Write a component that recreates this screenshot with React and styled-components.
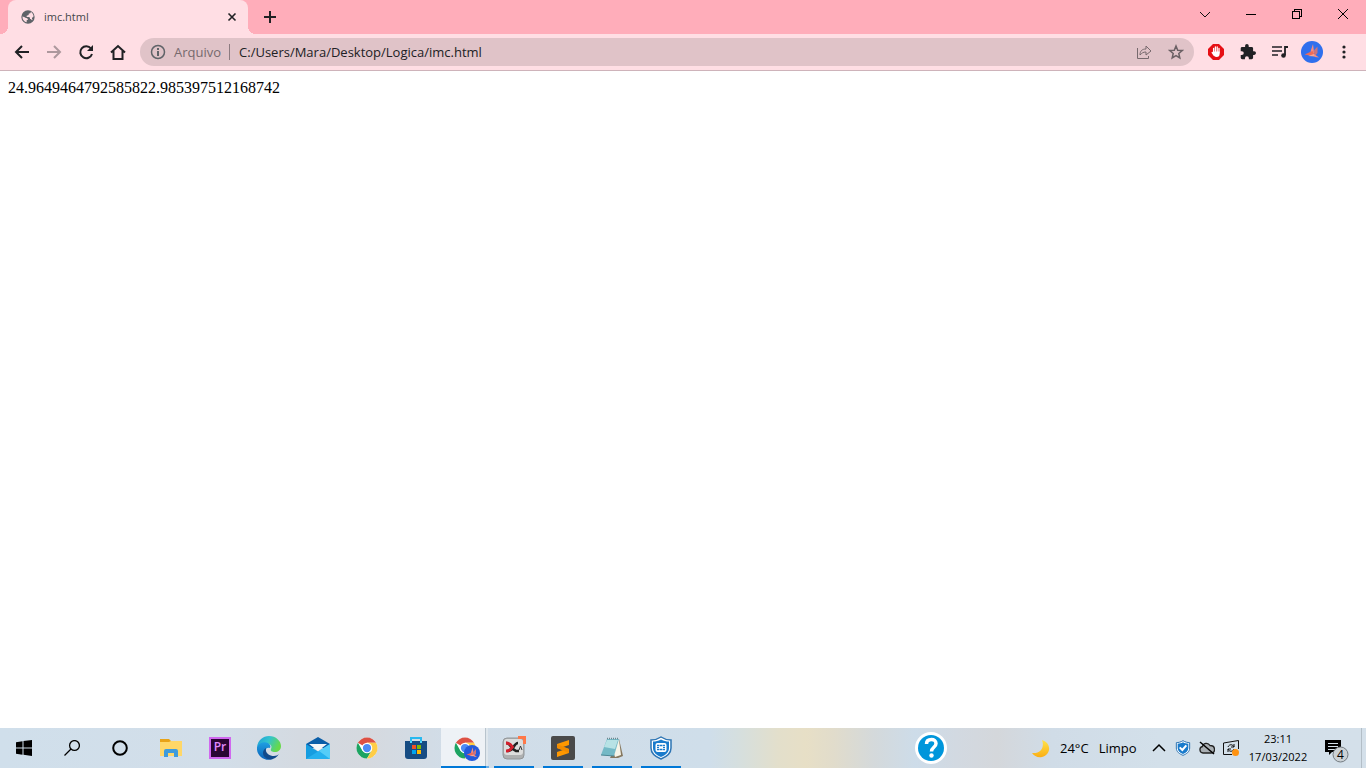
import React from "react";
import styled, { createGlobalStyle } from "styled-components";

const GlobalStyle = createGlobalStyle`
  * { box-sizing: border-box; }
  body { margin: 0; background: #ffffff; }
  button, input { font: inherit; color: inherit; border: 0; padding: 0; margin: 0; background: none; }
  svg { display: block; flex: none; }
`;

const Screen = styled.div`
  min-height: 100vh;
  display: flex;
  flex-direction: column;
  font-family: "Open Sans", "Noto Sans", sans-serif;
  color: #202124;
`;

const TabStrip = styled.header`
  display: flex;
  height: 34px;
  padding-left: 8px;
  background: #ffadba;
`;

const Tab = styled.div`
  position: relative;
  display: flex;
  align-items: center;
  width: 240px;
  padding: 0 8px 0 12px;
  gap: 8px;
  border-radius: 8px 8px 0 0;
  background: #ffdee4;
  font-size: 11px;
  line-height: 16px;
  color: #45474a;

  &::before, &::after {
    content: "";
    position: absolute;
    bottom: 0;
    width: 8px;
    height: 8px;
  }
  &::before { left: -8px; background: radial-gradient(circle at 0 0, #ffadba 8px, #ffdee4 8px); }
  &::after { right: -8px; background: radial-gradient(circle at 100% 0, #ffadba 8px, #ffdee4 8px); }
`;

const TabTitle = styled.span`
  flex: 1;
`;

const IconButton = styled.button`
  display: flex;
  align-items: center;
  justify-content: center;
  flex: none;
  width: ${(p) => p.$width || 32}px;
  height: ${(p) => p.$height || 28}px;
`;

const NewTab = styled(IconButton)`
  margin: 3px 0 0 8px;
`;

const WindowControls = styled.div`
  display: flex;
  margin-left: auto;
`;

const Toolbar = styled.nav`
  display: flex;
  align-items: center;
  height: 37px;
  padding: 0 6px;
  background: #ffdee4;
  border-bottom: 1px solid #ceb3ba;
`;

const AddressBar = styled.div`
  display: flex;
  align-items: center;
  flex: 1;
  height: 28px;
  margin: 0 6px;
  padding: 0 2px 0 10px;
  border-radius: 14px;
  background: #e0c3c8;
  font-size: 13px;
  line-height: 20px;
`;

const Scheme = styled.label`
  margin-left: 8px;
  padding-right: 8px;
  color: #76696d;
`;

const Divider = styled.span`
  width: 1px;
  height: 16px;
  margin-right: 9px;
  background: #8d7b80;
`;

const Url = styled.input`
  flex: 1;
  min-width: 0;
  height: 20px;
  outline: 0;
`;

const Document = styled.main`
  flex: 1;
  padding: 8px;
  background: #ffffff;
  color: #000000;
  font-family: "Liberation Serif", "Times New Roman", serif;
  font-size: 16px;
  line-height: 18px;
`;

const Taskbar = styled.footer`
  display: flex;
  height: 40px;
  color: #000000;
  background: linear-gradient(90deg, #d0dfeb 0%, #d2dee9 16%, #d4dae1 22%, #d5d9df 27%, #d1dde8 33%, #cfdeea 52%,
    #d5dfdf 54%, #e3dfcb 57%, #e7dfc6 59%, #e1dccb 61%, #d4d9db 64%, #cddce9 67%, #d2d9e1 70%, #d4d7db 73%, #d0dce7 77%, #d3e0ea 85%, #d4e0ea 100%);
`;

const SystemButtons = styled.div`
  display: flex;
  width: 146px;
`;

const TaskButton = styled.button`
  position: relative;
  display: flex;
  align-items: center;
  justify-content: center;
  flex: none;
  width: 49px;
  height: 40px;

  &::after {
    content: "";
    position: absolute;
    left: 5px;
    bottom: 0;
    width: 40px;
    height: 2px;
    background: ${(p) => (p.$running ? "#0078d7" : "transparent")};
  }
`;

const ActiveTask = styled(TaskButton)`
  background: linear-gradient(90deg, transparent 1px, #eef2f6 1px, #eef2f6 45px, #b8c4cd 45px, #b8c4cd 46px, #dfe7ed 46px, #dfe7ed 48px, transparent 48px);

  &::after {
    left: 1px;
    width: 48px;
    background: linear-gradient(90deg, #0078d7 45px, #6aaee4 45px);
  }
`;

const Tray = styled.div`
  display: flex;
  align-items: center;
  margin-left: auto;
`;

const Help = styled(IconButton)`
  margin-right: 84px;
`;

const Weather = styled.button`
  display: flex;
  align-items: center;
  gap: 10px;
  width: 116px;
  height: 40px;
  font-size: 13px;
  line-height: 20px;
  white-space: nowrap;
`;

const Clock = styled.button`
  width: 70px;
  font-size: 11px;
  line-height: 18px;
  text-align: center;
`;

const ShowDesktop = styled.button`
  width: 5px;
  height: 40px;
  border-left: 1px solid #b3bec7;
`;

const Glyph = ({ size = 16, h, box, children, ...rest }) => (
  <svg width={size} height={h || size} viewBox={box || `0 0 ${size} ${h || size}`} fill="none" aria-hidden="true" {...rest}>
    {children}
  </svg>
);

const ChromeLogo = ({ size = 22, ...rest }) => (
  <Glyph size={size} box="0 0 48 48" {...rest}>
    <circle cx="24" cy="24" r="23" fill="#fff" />
    <path d="M24 24 4.100 12.500A23 23 0 0 1 43.900 12.500H24Z" fill="#dd5144" />
    <path d="M4.100 12.500A23 23 0 0 0 24 47l10-17.200-10 4-10-4Z" fill="#1da462" />
    <path d="M24 12.500h19.900A23 23 0 0 1 24 47l10-17.200 1-8Z" fill="#ffcd46" />
    <circle cx="24" cy="24" r="11.500" fill="#fff" />
    <circle cx="24" cy="24" r="9" fill="#4c8bf5" />
  </Glyph>
);

const Origami = ({ fill = "#2f6fed" }) => (
  <>
    <circle cx="11" cy="11" r="11" fill={fill} />
    <path d="M12 3 9.500 10.500 13.500 15Z" fill="#f58d80" />
    <path d="M16.500 5.500 12.500 10l1.500 5 2.500-3Z" fill="#c9747f" />
    <path d="m3.500 13.500 8-3.500 3 5.500Z" fill="#ee6b58" />
    <path d="m7 15 6-2 1.500 2.500Z" fill="#f9a795" />
    <path d="m13 13 5 3.500-4-.5Z" fill="#f58d80" />
  </>
);

const Shield = ({ size, children }) => (
  <Glyph size={size} box="0 0 24 24">
    <path d="M12 1C9 3 5 4 2 4v8c0 6 5 9 10 11 5-2 10-5 10-11V4c-3 0-7-1-10-3Z" fill="#fff" stroke="#2d75b4" strokeWidth="1.500" />
    <path d="M12 3.500C9 5 7 5.500 4 5.500V12c0 4.500 3.500 7.200 8 9 4.500-1.800 8-4.500 8-9V5.500c-3 0-5-.5-8-2Z" fill="#197bcc" />
    {children}
  </Glyph>
);

export default function App() {
  return (
    <Screen>
      <GlobalStyle />
      <TabStrip>
        <Tab>
          <Glyph box="0 0 24 24">
            <path fill="#5f6368" d="M12 2a10 10 0 1 0 0 20 10 10 0 0 0 0-20Zm-8 9c1 1 3 1 4 2 2 0 4 1 4 3l-2 1v3c-4-1-7-5-6-9Zm14 6c-1-1-1-2-3-2v-2c-1-1-3-1-5-1v-2l3-1V7l3-1V4c3 2 5 5 4 8l-2 1v2l1 1Z" />
          </Glyph>
          <TabTitle>imc.html</TabTitle>
          <IconButton $width={16} $height={16} aria-label="Fechar guia">
            <Glyph stroke="#202124" strokeWidth="1.600"><path d="m4.500 4.500 7 7m0-7-7 7" /></Glyph>
          </IconButton>
        </Tab>
        <NewTab $width={28} aria-label="Nova guia">
          <Glyph stroke="#202124" strokeWidth="2"><path d="M8 2v12M2 8h12" /></Glyph>
        </NewTab>
        <WindowControls>
          <IconButton $width={46} aria-label="Pesquisar guias">
            <Glyph stroke="#111"><path d="m3 6 5 5 5-5" /></Glyph>
          </IconButton>
          <IconButton $width={46} aria-label="Minimizar">
            <Glyph stroke="#000" shapeRendering="crispEdges"><path d="M3 8.500h10" /></Glyph>
          </IconButton>
          <IconButton $width={46} aria-label="Restaurar">
            <Glyph stroke="#000" shapeRendering="crispEdges"><path d="M3.500 5.500h7v7h-7zM5.500 5V3.500h7v7H11" /></Glyph>
          </IconButton>
          <IconButton $width={46} aria-label="Fechar">
            <Glyph stroke="#000"><path d="m3 3 10 10m0-10L3 13" /></Glyph>
          </IconButton>
        </WindowControls>
      </TabStrip>

      <Toolbar>
        <IconButton aria-label="Voltar">
          <Glyph stroke="#202124" strokeWidth="2"><path d="M15 8H2m6-6L2 8l6 6" /></Glyph>
        </IconButton>
        <IconButton aria-label="Avançar">
          <Glyph stroke="#ad989d" strokeWidth="2"><path d="M1 8h13M8 2l6 6-6 6" /></Glyph>
        </IconButton>
        <IconButton aria-label="Recarregar">
          <Glyph><path d="M13 4.500A6 6 0 1 0 14 10" stroke="#202124" strokeWidth="2" /><path d="M15 1v6H9Z" fill="#202124" /></Glyph>
        </IconButton>
        <IconButton aria-label="Página inicial">
          <Glyph stroke="#202124" strokeWidth="2"><path d="M1 8.500 8 2l7 6.500M3.500 7v8h9V7" /></Glyph>
        </IconButton>
        <AddressBar>
          <Glyph>
            <circle cx="8" cy="8" r="6.500" stroke="#5f6368" strokeWidth="1.500" />
            <path d="M8 7v5M8 4v2" stroke="#5f6368" strokeWidth="2" />
          </Glyph>
          <Scheme htmlFor="url">Arquivo</Scheme>
          <Divider />
          <Url id="url" type="text" spellCheck={false} defaultValue="C:/Users/Mara/Desktop/Logica/imc.html" />
          <IconButton aria-label="Compartilhar">
            <Glyph stroke="#76696d"><path d="M1.500 4v10.500h11V12M4 11c0-4 2-6 6-6V2l5 5-5 4V8c-3 0-4 1-6 3Z" /></Glyph>
          </IconButton>
          <IconButton aria-label="Favoritos">
            <Glyph stroke="#6a6064" strokeWidth="1.500"><path d="m8 2 1.700 4.200 4.500.3-3.400 3 1 4.500L8 11.600 4.200 14l1-4.500-3.400-3 4.500-.3Z" /></Glyph>
          </IconButton>
        </AddressBar>
        <IconButton aria-label="Bloqueador de anúncios">
          <Glyph>
            <path d="M5 0h6l5 5v6l-5 5H5l-5-5V5Z" fill="#e60f14" />
            <path d="M5.600 8V4.500m1.800 3V3m1.800 5V3m1.800 6V4.500M4.200 8.500 6 11" stroke="#fff" strokeWidth="1.300" strokeLinecap="round" />
            <path d="M5 7.500h6.600V10a3 3 0 0 1-3 3c-2 0-2.600-1-3.600-3Z" fill="#fff" />
          </Glyph>
        </IconButton>
        <IconButton aria-label="Extensões">
          <Glyph box="1 1 22 22"><path fill="#202124" d="M20.500 11H19V7a2 2 0 0 0-2-2h-4V3.500a2.500 2.500 0 0 0-5 0V5H4a2 2 0 0 0-2 2v3.800h1.500a2.700 2.700 0 0 1 0 5.400H2V20a2 2 0 0 0 2 2h3.800v-1.500a2.700 2.700 0 0 1 5.400 0V22H17a2 2 0 0 0 2-2v-4h1.500a2.500 2.500 0 0 0 0-5Z" /></Glyph>
        </IconButton>
        <IconButton aria-label="Controle de mídia">
          <Glyph><path d="M0 3h10M0 7h10M0 11h6" stroke="#202124" strokeWidth="1.500" /><path d="M16 3h-3v8" stroke="#202124" strokeWidth="1.800" /><circle cx="11.500" cy="11.500" r="2.300" fill="#202124" /></Glyph>
        </IconButton>
        <IconButton aria-label="Perfil">
          <Glyph size={22}><Origami /></Glyph>
        </IconButton>
        <IconButton aria-label="Menu">
          <Glyph><circle cx="8" cy="3" r="1.600" fill="#202124" /><circle cx="8" cy="8" r="1.600" fill="#202124" /><circle cx="8" cy="13" r="1.600" fill="#202124" /></Glyph>
        </IconButton>
      </Toolbar>

      <Document>24.9649464792585822.985397512168742</Document>

      <Taskbar>
        <SystemButtons>
          <IconButton $width={48} $height={40} aria-label="Iniciar">
            <Glyph><path fill="#000" d="m0 2.200 6.500-.9v6.200H0zM7.500 1.100 16 0v7.500H7.500zM0 8.500h6.500v6.200L0 13.800zM7.500 8.500H16V16l-8.500-1.200z" /></Glyph>
          </IconButton>
          <IconButton $width={48} $height={40} aria-label="Pesquisar">
            <Glyph stroke="#000" strokeWidth="1.300"><circle cx="10.500" cy="5.500" r="4.900" /><path d="m7 9-6.500 6.500" /></Glyph>
          </IconButton>
          <IconButton $width={48} $height={40} aria-label="Cortana">
            <Glyph stroke="#000" strokeWidth="2"><circle cx="8" cy="8" r="6.800" /></Glyph>
          </IconButton>
        </SystemButtons>
        <TaskButton aria-label="Explorador de arquivos">
          <Glyph size={22} h={18}>
            <path d="M0 0h9l2 2h10v4H0Z" fill="#e8a317" />
            <path d="M0 3h9l2-1h11v15H0Z" fill="#ffd768" />
            <path d="M4 18v-6q0-2 2-2h10q2 0 2 2v6h-4v-4H8v4Z" fill="#3e9bdc" />
          </Glyph>
        </TaskButton>
        <TaskButton aria-label="Premiere Pro">
          <Glyph size={22}>
            <rect x="1" y="1" width="20" height="20" fill="#2a0634" stroke="#d068ef" strokeWidth="2" />
            <text x="11" y="14" fill="#e389ff" fontFamily="Open Sans, sans-serif" fontSize="12" fontWeight="600" textAnchor="middle">Pr</text>
          </Glyph>
        </TaskButton>
        <TaskButton aria-label="Microsoft Edge">
          <Glyph size={24}>
            <defs>
              <linearGradient id="edgeTop" x1="0" y1="0" x2="1" y2=".4"><stop stopColor="#1d9cd8" /><stop offset=".5" stopColor="#32c3cf" /><stop offset="1" stopColor="#66d94b" /></linearGradient>
              <linearGradient id="edgeSide" x1="0" y1="0" x2="0" y2="1"><stop stopColor="#1fa0e2" /><stop offset="1" stopColor="#0b61b8" /></linearGradient>
            </defs>
            <path d="M0 11C1 4 6 0 12 0c7 0 12 5 12 10 0 4-3 6-6 6-3 0-5-1-4-3 2-4-2-6-6-5-3 0-6 1-8 3Z" fill="url(#edgeTop)" />
            <path d="M0 11c2-4 7-6 11-4 2 1 3 3 2 5-3-1-5 1-5 4 0 4 4 7 8 7-8 3-17-3-16-12Z" fill="url(#edgeSide)" />
            <path d="M9 12c-1 5 3 8 8 8 2 0 4-1 5-2-3 5-9 7-13 4-4-2-4-8 0-10Z" fill="#114a8b" />
          </Glyph>
        </TaskButton>
        <TaskButton aria-label="Email">
          <Glyph size={24} h={24}>
            <path d="M0 8 12 1l12 7v4H0Z" fill="#0a5ea8" />
            <path d="M0 8 24 23H0Z" fill="#169de0" />
            <path d="M24 8v15H0Z" fill="#25b0ee" />
            <path d="m13 15 11 8V8Z" fill="#55cdf8" />
            <path d="M3 8h18l-9 7Z" fill="#f3f6f8" />
          </Glyph>
        </TaskButton>
        <TaskButton aria-label="Google Chrome"><ChromeLogo /></TaskButton>
        <TaskButton aria-label="Microsoft Store">
          <Glyph size={24}>
            <path d="M7 7V2h10v5" stroke="#29b9ef" strokeWidth="2" />
            <path d="M1 5h22v15q0 3-3 3H4q-3 0-3-3Z" fill="#164c83" />
            <path d="M7 5v2m10-2v2" stroke="#50d8ff" strokeWidth="2" />
            <path d="M8 9h4v4H8z" fill="#f25022" /><path d="M13 9h4v4h-4z" fill="#7fba00" />
            <path d="M8 14h4v4H8z" fill="#00a4ef" /><path d="M13 14h4v4h-4z" fill="#ffb900" />
          </Glyph>
        </TaskButton>
        <ActiveTask aria-label="imc.html - Google Chrome">
          <Glyph size={30}>
            <ChromeLogo x="4" y="4" />
            <svg x="14" y="12" width="16" height="16" viewBox="0 0 22 22"><Origami fill="#2259dc" /></svg>
          </Glyph>
        </ActiveTask>
        <TaskButton $running aria-label="XMind">
          <Glyph size={24}>
            <rect x="1" y="2" width="21" height="21" rx="4" fill="#aeb0b1" stroke="#929698" />
            <rect x="2" y="3" width="19" height="16" rx="3" fill="#dcdddd" />
            <path d="M16 1.500h6.500V8" stroke="#ff7848" strokeWidth="3" />
            <path d="M16 7q-2 0-4.500 4T5 15" stroke="#222" strokeWidth="2.600" />
            <path d="M4 7q3 0 5 3.500t5 4.500h3" stroke="#222" strokeWidth="2.600" />
            <path d="M4 7q4 0 6.500 4Q8 15 4 15" stroke="#d31f2c" strokeWidth="2.800" />
            <path d="m17 14 1.500-4 1.500 4" stroke="#333" />
          </Glyph>
        </TaskButton>
        <TaskButton $running aria-label="Sublime Text">
          <Glyph size={24}>
            <rect width="24" height="24" rx="2" fill="#4a4a4a" />
            <path d="m6 8 12-4v5l-6 2 6 2v4L6 21v-5l6-2-6-2Z" fill="#ff9800" />
            <path d="m6 8 12 5v4L6 12Z" fill="#f28c00" />
          </Glyph>
        </TaskButton>
        <TaskButton $running aria-label="Bloco de notas">
          <Glyph size={24}>
            <path d="m19 3 4 17-5 2H10Z" fill="#85775e" />
            <path d="m9 3 10 1 2 15-6 2Z" fill="#f6f4e8" />
            <path d="M7 3h12l-5 17-13-1Z" fill="#74b9c6" />
            <path d="M7 4h11l-3 9-11-2Z" fill="#b7e2e5" />
            <path d="M7 2.500h12" stroke="#6d888e" strokeWidth="1.500" strokeDasharray="1 1" />
            <path d="m1 19 13 1" stroke="#4c8795" />
          </Glyph>
        </TaskButton>
        <TaskButton $running aria-label="FortiClient">
          <Shield size={24}>
            <rect x="6.500" y="7" width="11" height="9" rx="2" fill="#fff" />
            <path d="M8 9.500h2.500M11 9.500h2M13.500 9.500H16M8 13.500h2.500M11 13.500h2M13.500 13.500H16" stroke="#197bcc" strokeWidth="1.500" />
            <path d="M8 11.500h2m4 0h2" stroke="#197bcc" />
          </Shield>
        </TaskButton>

        <Tray>
          <Help $height={40} aria-label="Ajuda">
            <Glyph size={32}>
              <circle cx="16" cy="16" r="16" fill="#fff" /><circle cx="16" cy="16" r="13" fill="#0096db" />
              <path d="M11.500 12c0-3 2-4.500 5-4.500 2.500 0 4.500 1.500 4.500 4 0 4-4.500 3.500-4.500 8" stroke="#fff" strokeWidth="3.500" />
              <circle cx="16.500" cy="23.500" r="2.200" fill="#fff" />
            </Glyph>
          </Help>
          <Weather>
            <Glyph size={19}>
              <defs><linearGradient id="moon" x1="0" y1="0" x2="0" y2="1"><stop stopColor="#ffe34c" /><stop offset="1" stopColor="#fbae13" /></linearGradient></defs>
              <path d="M11 1c10 3 9 15 0 17-4 1-8-1-10-4 8 1 13-5 10-13Z" fill="url(#moon)" />
            </Glyph>
            <span>24°C</span><span>Limpo</span>
          </Weather>
          <IconButton $width={24} $height={40} aria-label="Mostrar ícones ocultos">
            <Glyph stroke="#000" strokeWidth="1.500"><path d="m2 11 6-6 6 6" /></Glyph>
          </IconButton>
          <IconButton $width={24} $height={40} aria-label="Proteção">
            <Shield size={16}><path d="m7 11 4 4 6-7" stroke="#fff" strokeWidth="3" /></Shield>
          </IconButton>
          <IconButton $width={24} $height={40} aria-label="OneDrive">
            <Glyph stroke="#222"><path d="M4 13a3.300 3.300 0 0 1-.5-6.500C4 3 9 2 11 5.500c3 0 4.500 2 4.500 4S14 13 12 13Z" fill="#a9afb3" strokeWidth="1.300" /><path d="m1 2 14 12" stroke="#000" strokeWidth="1.500" /></Glyph>
          </IconButton>
          <IconButton $width={24} $height={40} aria-label="Atualizações">
            <Glyph>
              <path d="M9 14.500H.5V3L15.500.5V9" stroke="#111" />
              <path d="M5 7c1-3 5-3 6 0M11 4v3H8m3 2c-1 3-5 3-6 0m0 3V9h3" stroke="#111" />
              <circle cx="12.500" cy="12.500" r="3.500" fill="#ff9311" />
            </Glyph>
          </IconButton>
          <Clock>23:11<br />17/03/2022</Clock>
          <IconButton $width={48} $height={40} aria-label="Notificações, 4 novas">
            <Glyph size={24} h={30}>
              <path d="M0 7h16v12H7l-3 3v-3H0Z" fill="#000" />
              <path d="M3 10.500h10M3 13.500h10M3 16.500h7" stroke="#d3dfe9" />
              <circle cx="15.500" cy="21.500" r="7.500" fill="#cbd1d5" stroke="#747c82" />
              <text x="15.500" y="26" fill="#000" fontFamily="Open Sans, sans-serif" fontSize="12" textAnchor="middle">4</text>
            </Glyph>
          </IconButton>
          <ShowDesktop aria-label="Mostrar área de trabalho" />
        </Tray>
      </Taskbar>
    </Screen>
  );
}
